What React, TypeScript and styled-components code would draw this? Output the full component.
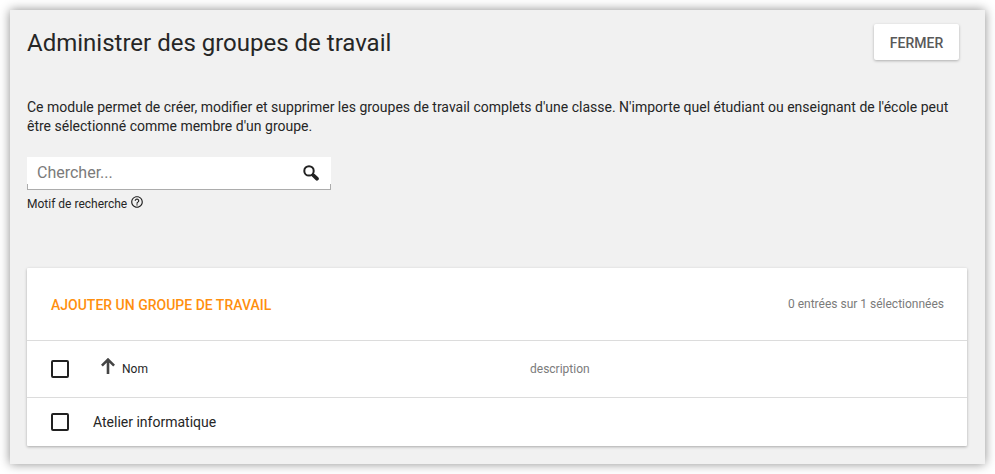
import React from "react";
import styled, { createGlobalStyle } from "styled-components";

const GlobalStyle = createGlobalStyle`
  * { box-sizing: border-box; }
  body {
    margin: 0;
    background: #fff;
    color: #262626;
    font-family: Roboto, "Liberation Sans", sans-serif;
    font-size: 14px;
    overflow: hidden;
  }
`;

const Panel = styled.main`
  width: 975px;
  height: 454px;
  margin: 10px;
  padding: 14px 18px 18px 17px;
  background: #f1f1f1;
  box-shadow: 0 0 10px rgba(0, 0, 0, 0.45);
`;

const Header = styled.header`
  display: flex;
  justify-content: space-between;
  align-items: center;
  height: 36px;
  padding-right: 8px;
`;

const Title = styled.h1`
  margin: 2px 0 0;
  font-size: 24px;
  line-height: 32px;
  font-weight: 400;
`;

const CloseButton = styled.button`
  width: 85px;
  height: 36px;
  padding: 2px 0 0;
  border: 0;
  border-radius: 2px;
  background: #fff;
  color: #595959;
  font: 500 14px/34px Roboto, sans-serif;
  box-shadow: 0 1px 3px rgba(0, 0, 0, 0.28);
`;

const Intro = styled.p`
  margin: 38px 0 0;
  line-height: 19px;
`;

const SearchField = styled.label`
  display: flex;
  align-items: center;
  width: 304px;
  height: 33px;
  margin-top: 21px;
  padding: 0 12px 1px 10px;
  background:
    linear-gradient(#acacac, #acacac) left bottom / 1px 6px no-repeat,
    linear-gradient(#acacac, #acacac) right bottom / 1px 6px no-repeat,
    linear-gradient(#acacac, #acacac) left bottom / 100% 1px no-repeat,
    #fff;
`;

const SearchInput = styled.input`
  flex: 1;
  min-width: 0;
  padding: 0;
  border: 0;
  outline: 0;
  background: transparent;
  font: 400 16px/24px Roboto, sans-serif;
  &::placeholder { color: #7b7b7b; opacity: 1; }
`;

const SearchHint = styled.div`
  display: flex;
  align-items: center;
  gap: 3px;
  height: 18px;
  margin-top: 5px;
  font-size: 12px;
  line-height: 18px;
  svg { margin-top: -5px; }
`;

const Card = styled.section`
  height: 178px;
  margin-top: 55px;
  background: #fff;
  border-radius: 1px;
  box-shadow: 0 1px 3px rgba(0, 0, 0, 0.3);
`;

const CardHeader = styled.div`
  display: flex;
  align-items: center;
  justify-content: space-between;
  height: 72px;
  padding: 0 23px 0 24px;
`;

const AddButton = styled.button`
  padding: 2px 0 0;
  border: 0;
  background: none;
  color: #ff8f0f;
  font: 500 14px/20px Roboto, sans-serif;
`;

const Count = styled.span`
  font-size: 12px;
  color: #7b7b7b;
`;

const Row = styled.div<{ $height: number }>`
  display: grid;
  grid-template-columns: 42px 437px 1fr;
  align-items: center;
  height: ${({ $height }) => $height}px;
  padding-left: 24px;
  border-top: 1px solid #dcdcdc;
`;

const Checkbox = styled.input.attrs({ type: "checkbox" })`
  appearance: none;
  width: 18px;
  height: 18px;
  margin: 0;
  border: 2px solid #212121;
  border-radius: 2px;
`;

const SortHeading = styled.span`
  display: flex;
  align-items: center;
  gap: 7px;
  padding-left: 8px;
  font-size: 12px;
  svg { margin-top: -6px; }
`;

const ColumnHeading = styled.span`
  font-size: 12px;
  color: #7b7b7b;
`;

const SearchIcon = () => (
  <svg width="16" height="16" viewBox="0 0 16 16" fill="none" stroke="#212121">
    <circle cx="6" cy="5.9" r="4.7" strokeWidth="2" />
    <path d="M9.2 9.1 10.8 10.7" strokeWidth="2" />
    <path d="m10.6 10.5 3.300 3.200" strokeWidth="3.800" strokeLinecap="round" />
  </svg>
);

const HelpIcon = () => (
  <svg width="14" height="14" viewBox="0 0 24 24" fill="#212121">
    <path d="M11 18h2v-2h-2v2zm1-16C6.48 2 2 6.48 2 12s4.48 10 10 10 10-4.480 10-10S17.520 2 12 2zm0 18c-4.410 0-8-3.590-8-8s3.590-8 8-8 8 3.590 8 8-3.590 8-8 8zm0-14c-2.210 0-4 1.790-4 4h2c0-1.100.9-2 2-2s2 .9 2 2c0 2-3 1.750-3 5h2c0-2.250 3-2.500 3-5 0-2.210-1.790-4-4-4z" />
  </svg>
);

const SortIcon = () => (
  <svg width="14" height="16" viewBox="0 0 14 16" fill="none" stroke="#444">
    <path d="M7 16V2M.9 7.700 7 1.600l6.100 6.100" strokeWidth="2.600" />
  </svg>
);

export default function App() {
  return (
    <>
      <GlobalStyle />
      <Panel>
        <Header>
          <Title>Administrer des groupes de travail</Title>
          <CloseButton>FERMER</CloseButton>
        </Header>
        <Intro>
          Ce module permet de créer, modifier et supprimer les groupes de travail complets d'une classe. N'importe quel
          étudiant ou enseignant de l'école peut être sélectionné comme membre d'un groupe.
        </Intro>
        <SearchField>
          <SearchInput placeholder="Chercher..." />
          <SearchIcon />
        </SearchField>
        <SearchHint>
          Motif de recherche
          <HelpIcon />
        </SearchHint>
        <Card>
          <CardHeader>
            <AddButton>AJOUTER UN GROUPE DE TRAVAIL</AddButton>
            <Count>0 entrées sur 1 sélectionnées</Count>
          </CardHeader>
          <Row $height={57}>
            <Checkbox aria-label="Tout sélectionner" />
            <SortHeading>
              <SortIcon />
              Nom
            </SortHeading>
            <ColumnHeading>description</ColumnHeading>
          </Row>
          <Row $height={49}>
            <Checkbox aria-label="Atelier informatique" />
            <span>Atelier informatique</span>
          </Row>
        </Card>
      </Panel>
    </>
  );
}
